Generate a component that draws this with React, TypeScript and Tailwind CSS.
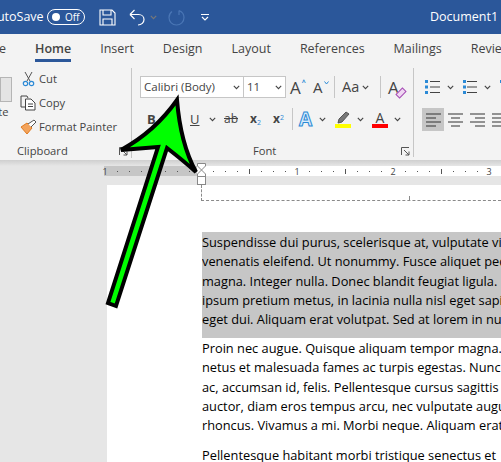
const Chev = ({ className = "" }: { className?: string }) => (
  <svg width="7" height="5" viewBox="0 0 7 5" className={`flex-none ${className}`}>
    <path d="M0.8 0.8 L3.5 3.6 L6.2 0.8" fill="none" stroke="#444" strokeWidth="1.1" />
  </svg>
);

const Launcher = () => (
  <svg width="9" height="9" viewBox="0 0 9 9" className="flex-none">
    <path d="M0.5 8 V0.5 H8 M3 3 L8 8 M8 4.5 V8 H4.5" fill="none" stroke="#555" strokeWidth="1" />
  </svg>
);

const VSep = ({ h = "h-[22px]" }: { h?: string }) => <div className={`w-px flex-none bg-[#c6c6c6] ${h}`} />;

const AlignIcon = ({ lines }: { lines: [number, number][] }) => (
  <svg width="15" height="14" viewBox="0 0 15 14" className="flex-none">
    {lines.map(([x, w], i) => (
      <rect key={i} x={x} y={i * 4 + 0.5} width={w} height="1" fill="#333" />
    ))}
  </svg>
);

const tabs = ["Home", "Insert", "Design", "Layout", "References", "Mailings", "Review"];

const highlighted = [
  "Suspendisse dui purus, scelerisque at, vulputate vitae,",
  "venenatis eleifend. Ut nonummy. Fusce aliquet pede",
  "magna. Integer nulla. Donec blandit feugiat ligula. Donec",
  "ipsum pretium metus, in lacinia nulla nisl eget sapien.",
  "eget dui. Aliquam erat volutpat. Sed at lorem in nunc",
];

const second = [
  "Proin nec augue. Quisque aliquam tempor magna. Pellentesque",
  "netus et malesuada fames ac turpis egestas. Nunc ac magna",
  "ac, accumsan id, felis. Pellentesque cursus sagittis felis",
  "auctor, diam eros tempus arcu, nec vulputate augue magna",
  "rhoncus. Vivamus a mi. Morbi neque. Aliquam erat volutpat",
];

const rulerMarks = Array.from({ length: 35 }, (_, i) => i);

const RulerMark = ({ i }: { i: number }) => {
  if (i === 0 || i === 16 || i === 24 || i === 32) {
    const n = i === 0 ? 1 : (i - 8) / 8;
    return <span className="text-[9px] leading-none text-[#444]">{n}</span>;
  }
  if (i === 8) return null;
  if (i % 8 === 4) return <div className="h-[5px] w-px bg-[#555]" />;
  return <div className="h-px w-px bg-[#555]" />;
};

const TextLine = ({ text }: { text: string }) => (
  <div className="h-[19.3px] overflow-hidden whitespace-nowrap">{text}</div>
);

export default function App() {
  return (
    <div className="relative h-[462px] w-[501px] overflow-hidden bg-[#e6e6e6] font-['Open_Sans',sans-serif]">
      {/* title bar */}
      <div className="flex h-[34px] items-center overflow-hidden bg-[#2b579a] text-white">
        <span className="ml-[-11px] w-[51px] flex-none text-right text-[12.5px]">AutoSave</span>
        <div className="ml-[7px] flex h-[16px] w-[38px] flex-none items-center rounded-full border border-white pl-[4px]">
          <div className="h-[8px] w-[8px] rounded-full bg-white" />
          <span className="ml-[5px] text-[10px] leading-none">Off</span>
        </div>
        <svg width="17" height="17" viewBox="0 0 17 17" className="ml-[14px] flex-none">
          <path d="M1 1 H13 L16 4 V16 H1 Z M4 1 V6 H12 V1 M4 16 V10 H13 V16" fill="none" stroke="#fff" strokeWidth="1.1" />
        </svg>
        <svg width="16" height="17" viewBox="0 0 16 17" className="ml-[13px] flex-none">
          <path d="M1 5.5 H9.5 C13 5.5 15 8 15 10.5 C15 13.5 12.5 16 9 16 M1 5.5 L5.5 1 M1 5.5 L5.5 10" fill="none" stroke="#fff" strokeWidth="1.2" />
        </svg>
        <Chev className="ml-[5px] invert brightness-200" />
        <svg width="17" height="17" viewBox="0 0 17 17" className="ml-[11px] flex-none">
          <path d="M11 1.5 C14.5 3 16 5.5 16 8.5 C16 12.8 12.8 16 8.5 16 C4.2 16 1 12.8 1 8.5 C1 6 2.3 3.8 4 2.5 M11 1.5 V6" fill="none" stroke="#4a76b5" strokeWidth="1.2" />
        </svg>
        <svg width="8" height="7" viewBox="0 0 8 7" className="ml-[16px] flex-none">
          <path d="M0 0.5 H8 M1 3 L4 6 L7 3" fill="none" stroke="#fff" strokeWidth="1.1" />
        </svg>
        <span className="ml-[221px] flex-none text-[12.5px]">Document1</span>
        <span className="ml-[7px] flex-none text-[12.5px]">-</span>
      </div>

      {/* tabs */}
      <div className="flex h-[30px] items-start gap-[29px] overflow-hidden bg-[#f3f3f3] pt-[6px] text-[12.5px] leading-[18px] text-[#444]">
        <span className="ml-[-26px] w-[32px] flex-none text-right">File</span>
        {tabs.map((t) => (
          <span key={t} className={t === "Home" ? "relative flex-none font-semibold" : "flex-none"}>
            {t}
            {t === "Home" && <span className="absolute left-0 right-0 top-[19px] h-[3px] bg-[#2b579a]" />}
          </span>
        ))}
      </div>

      {/* ribbon */}
      <div className="flex h-[96px] overflow-hidden bg-[#f3f3f3] text-[#444]">
        {/* clipboard */}
        <div className="flex w-[131px] flex-none flex-col">
          <div className="flex h-[79px] flex-none">
            <div className="flex w-[22px] flex-none flex-col pt-[13px]">
              <div className="h-[25px] w-[12px] border border-[#b5b5b5] bg-[#e4e4e4]" />
              <span className="ml-[-20px] mt-[2px] text-[11.2px] leading-[16px]">Paste</span>
            </div>
            <div className="flex flex-col pt-[3px] text-[11.2px] leading-[16px]">
              <div className="flex h-[24px] items-center gap-[4px]">
                <svg width="13" height="16" viewBox="0 0 13 16" className="flex-none">
                  <path d="M3 1 L8 10 M10 1 L5 10" stroke="#555" strokeWidth="1" fill="none" />
                  <circle cx="3.5" cy="12.5" r="2.2" fill="none" stroke="#2b8ad6" strokeWidth="1.2" />
                  <circle cx="9.5" cy="12.5" r="2.2" fill="none" stroke="#2b8ad6" strokeWidth="1.2" />
                </svg>
                <span>Cut</span>
              </div>
              <div className="ml-[-2px] flex h-[24px] items-center gap-[3px]">
                <svg width="16" height="16" viewBox="0 0 16 16" className="flex-none">
                  <path d="M6 12 H1 V1 H7 L8 3" fill="none" stroke="#444" />
                  <path d="M5.5 4 H11 L15 8 V15 H5.5 Z M8 9 H13 M8 11.5 H13" fill="#fff" stroke="#444" />
                </svg>
                <span>Copy</span>
              </div>
              <div className="ml-[-2px] flex h-[24px] items-center gap-[2px]">
                <svg width="17" height="16" viewBox="0 0 17 16" className="flex-none">
                  <path d="M1 8 L7 4 L12 9 L7 15 Z" fill="#f3a35b" stroke="#e07b20" />
                  <path d="M8 5 L14 1 L16 3 L11 8" fill="#fff" stroke="#555" />
                </svg>
                <span>Format Painter</span>
              </div>
            </div>
          </div>
          <div className="flex h-[17px] items-center justify-between pl-[17px] pr-[3px] text-[11.2px]">
            <span>Clipboard</span>
            <Launcher />
          </div>
        </div>
        <div className="mt-[4px] h-[90px] w-px flex-none bg-[#c6c6c6]" />

        {/* font */}
        <div className="flex w-[281px] flex-none flex-col pl-[8px]">
          <div className="flex h-[79px] flex-none flex-col pt-[12px]">
            <div className="flex h-[22px] items-center">
              <div className="flex h-[22px] w-[104px] flex-none items-center justify-between border border-[#c6c6c6] bg-white px-[3px] text-[11.5px]">
                <span>Calibri (Body)</span>
                <Chev />
              </div>
              <div className="ml-[-1px] flex h-[22px] w-[43px] flex-none items-center justify-between border border-[#c6c6c6] bg-white px-[3px] text-[11.5px]">
                <span>11</span>
                <Chev />
              </div>
              <div className="ml-[4px] flex w-[19px] flex-none items-start">
                <span className="text-[17px] leading-none">A</span>
                <span className="ml-px text-[7px] font-bold leading-none text-[#2b8ad6]">^</span>
              </div>
              <div className="ml-[4px] flex w-[17px] flex-none items-start">
                <span className="text-[15px] leading-none">A</span>
                <svg width="5" height="4" viewBox="0 0 5 4" className="ml-px mt-px"><path d="M0.5 0.5 L2.5 3 L4.5 0.5" fill="none" stroke="#2b8ad6" /></svg>
              </div>
              <div className="ml-[4px]"><VSep /></div>
              <span className="ml-[7px] w-[17px] flex-none text-[14.5px] leading-none">Aa</span>
              <Chev className="ml-[3px]" />
              <div className="ml-[11px]"><VSep /></div>
              <div className="ml-[7px] flex items-end">
                <span className="text-[17px] leading-none">A</span>
                <div className="ml-[-3px] h-[6px] w-[10px] -rotate-45 border-[1.5px] border-[#a64fb5] bg-[#efd7f2]" />
              </div>
            </div>
            <div className="mt-[10px] flex h-[22px] items-center">
              <span className="ml-[7px] w-[43px] flex-none text-[13px] font-bold leading-none">B</span>
              <span className="w-[9px] flex-none text-[13px] leading-none underline">U</span>
              <Chev className="ml-[10px]" />
              <span className="ml-[8px] w-[16px] flex-none text-[12px] leading-none line-through">ab</span>
              <span className="ml-[10px] w-[12px] flex-none text-[12px] font-bold leading-none">x<sub className="text-[7px] font-normal text-[#2b8ad6]">2</sub></span>
              <span className="ml-[11px] w-[10px] flex-none text-[12px] font-bold leading-none">x<sup className="text-[7px] font-normal text-[#2b8ad6]">2</sup></span>
              <div className="ml-[9px]"><VSep /></div>
              <span className="ml-[6px] w-[16px] flex-none text-[19px] font-bold leading-none text-[#d8ecfb] [-webkit-text-stroke:1px_#2b8ad6]">A</span>
              <Chev className="ml-[4px]" />
              <div className="ml-[9px] flex w-[16px] flex-none flex-col items-center">
                <svg width="16" height="13" viewBox="0 0 16 13">
                  <path d="M3 12 L4 8 L11 1 L14 3 L7 11 Z" fill="#777" stroke="#555" />
                </svg>
                <div className="h-[4px] w-[16px] bg-[#ffff00]" />
              </div>
              <Chev className="ml-[6px]" />
              <div className="ml-[8px] flex w-[16px] flex-none flex-col items-center">
                <span className="text-[14px] leading-[13px]">A</span>
                <div className="h-[4px] w-[16px] bg-[#ff0000]" />
              </div>
              <Chev className="ml-[6px]" />
            </div>
          </div>
          <div className="flex h-[17px] items-center pr-[3px] text-[11.2px]">
            <span className="ml-[113px]">Font</span>
            <div className="ml-auto"><Launcher /></div>
          </div>
        </div>
        <div className="mt-[4px] h-[89px] w-px flex-none bg-[#c6c6c6]" />

        {/* paragraph */}
        <div className="flex flex-none flex-col pl-[8px] pt-[13px]">
          <div className="flex h-[20px] items-center">
            <svg width="16" height="16" viewBox="0 0 16 16" className="ml-[3px] flex-none">
              <path d="M0 1 H3 V4 H0 Z M0 6.5 H3 V9.5 H0 Z M0 12 H3 V15 H0 Z" fill="#2b8ad6" />
              <path d="M5 2.5 H15 M5 8 H15 M5 13.5 H15" stroke="#444" />
            </svg>
            <Chev className="ml-[6px]" />
            <svg width="16" height="16" viewBox="0 0 16 16" className="ml-[8px] flex-none">
              <rect x="1" y="1" width="3" height="3" fill="#2b8ad6" />
              <rect x="1" y="6.5" width="3" height="3" fill="#2b8ad6" />
              <rect x="1" y="12" width="3" height="3" fill="#2b8ad6" />
              <path d="M5 2.5 H15 M5 8 H15 M5 13.5 H15" stroke="#444" />
            </svg>
            <Chev className="ml-[6px]" />
            <svg width="16" height="16" viewBox="0 0 16 16" className="ml-[8px] flex-none">
              <rect x="1" y="1" width="2" height="3" fill="#2b8ad6" />
            </svg>
          </div>
          <div className="mt-[11px] flex h-[23px] items-center">
            <div className="flex h-[23px] w-[22px] flex-none items-center justify-center bg-[#c6c6c6]">
              <AlignIcon lines={[[0, 15], [0, 10], [0, 15], [0, 10]]} />
            </div>
            <div className="flex w-[22px] flex-none justify-center">
              <AlignIcon lines={[[0, 15], [3, 9], [0, 15], [3, 9]]} />
            </div>
            <div className="flex w-[22px] flex-none justify-center">
              <AlignIcon lines={[[0, 15], [5, 10], [0, 15], [5, 10]]} />
            </div>
            <div className="flex w-[22px] flex-none justify-center">
              <AlignIcon lines={[[0, 15], [0, 15], [0, 15], [0, 15]]} />
            </div>
          </div>
        </div>
      </div>

      {/* shadow under ribbon */}
      <div className="h-[6px] bg-gradient-to-b from-[#cfcfcf] to-[#e6e6e6]" />

      {/* ruler */}
      <div className="flex h-[10px] overflow-hidden">
        <div className="ml-[104px] h-full w-[93px] flex-none bg-[#c6c6c6]" />
        <div className="h-full flex-1 bg-white" />
      </div>
      <div className="absolute left-[99px] top-[166px] flex h-[10px]">
        {rulerMarks.map((i) => (
          <div key={i} className="flex w-[12px] flex-none items-center justify-center">
            <RulerMark i={i} />
          </div>
        ))}
      </div>
      <svg width="10" height="23" viewBox="0 0 10 23" className="absolute left-[197px] top-[163px]">
        <path d="M0.5 0.5 H8.5 V3 L4.5 7 L8.5 11 V13.5 H0.5 V11 L4.5 7 L0.5 3 Z" fill="#fff" stroke="#888" />
        <rect x="0.5" y="13.5" width="8" height="8" fill="#fff" stroke="#888" />
      </svg>

      {/* page */}
      <div className="ml-[107px] mt-[9px] h-[277px] bg-white pl-[94px] text-[12.8px] leading-[19.3px] text-black">
        <div className="relative h-[16px] border-b border-l border-dashed border-[#8a8a8a]">
          <div className="absolute bottom-0 left-[207px] h-[4px] border-l border-dashed border-[#8a8a8a]" />
        </div>
        <div className="ml-px mt-[31px] h-[106px] bg-[#c6c6c6] pt-[1px]">
          {highlighted.map((l) => (
            <TextLine key={l} text={l} />
          ))}
        </div>
        <div className="ml-px mt-[1px]">
          {second.map((l) => (
            <TextLine key={l} text={l} />
          ))}
        </div>
        <div className="ml-px mt-[11px]">
          <TextLine text="Pellentesque habitant morbi tristique senectus et" />
        </div>
      </div>

      {/* green arrow */}
      <svg width="501" height="462" viewBox="0 0 501 462" className="pointer-events-none absolute left-0 top-0">
        <path
          d="M177 100 C179 125 184 150 196 172 C186 163 176 155 167 148 L116 306 L108 303 L158 147 C146 148 133 149 121 150 C143 138 163 120 177 100 Z"
          fill="#00ff00"
          stroke="#000"
          strokeWidth="4"
          strokeLinejoin="miter"
        />
      </svg>
    </div>
  );
}
